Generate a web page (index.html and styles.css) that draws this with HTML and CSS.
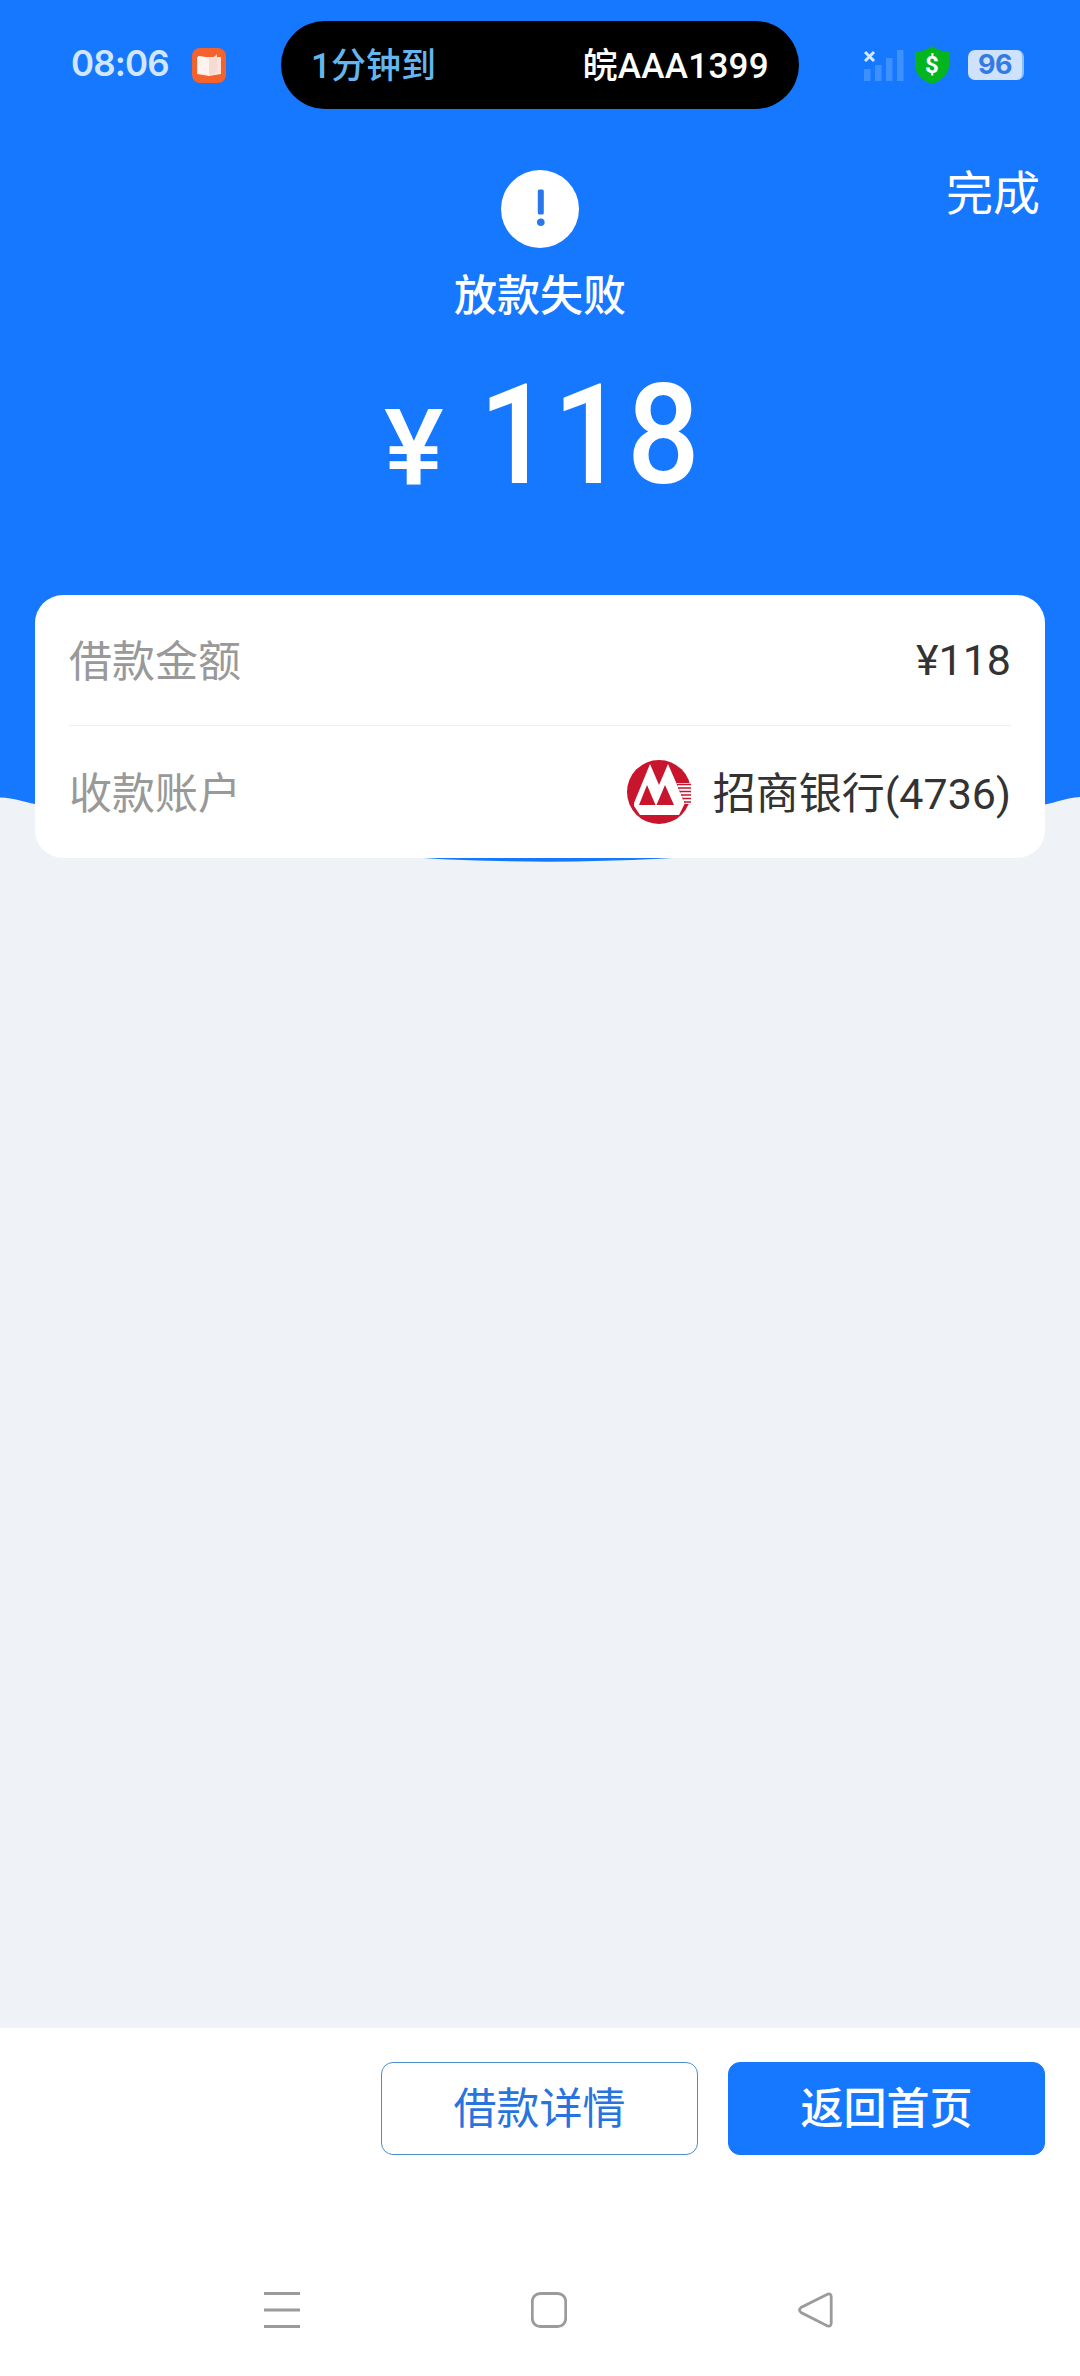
FILE: index.html
```html
<!DOCTYPE html>
<html lang="zh-CN">
<head>
<meta charset="utf-8">
<title>放款失败</title>
<link rel="stylesheet" href="styles.css">
</head>
<body>
<div class="screen">
  <svg class="backdrop" viewBox="0 0 1080 870" aria-hidden="true">
    <path fill="#1677ff" d="M0 0H1080V797C1065 798 1058 802 1045 804.500C930 832 750 861.700 548 861.700S150 832 35 804C24 802 15 798 0 797.500Z"/>
  </svg>
  <header class="status">
    <span class="time">08:06</span>
    <svg class="book" viewBox="0 0 34 35">
      <rect width="34" height="35" rx="8" fill="#f4622d"/>
      <path fill="#fbe3da" d="M5 9H29V26L17 28 5 26Z"/>
      <path fill="#fff3ed" d="M6 8Q13 8 17 11V28Q13 25 6 26Z"/>
      <path fill="#f5dcd3" d="M17 11Q22 10 25 6V24Q21 26 17 28Z"/>
    </svg>
    <div class="island"><span class="eta">1分钟到</span><span class="plate">皖AAA1399</span></div>
    <svg class="signal" viewBox="0 0 40 31">
      <path fill="#3f90ff" d="M0 19h6.500v12H0zM11 15h6.500v16H11zM22 8h6.500v23H22zM33 0h6.500v31H33z"/>
      <path stroke="#d6e8ff" stroke-width="3" d="m1 2 9 9m0-9-9 9"/>
    </svg>
    <svg class="shield" viewBox="0 0 34 38">
      <path fill="#04b51d" d="M17 0Q23 5 34 6V20Q33 32 17 38 1 32 0 20V6Q11 5 17 0Z"/>
      <text x="17" y="27" text-anchor="middle">$</text>
    </svg>
    <span class="battery">96</span>
  </header>
  <main class="content">
    <div class="toolbar"><span class="done">完成</span></div>
    <section class="result">
      <svg class="alert" viewBox="0 0 78 78">
        <circle cx="39" cy="39" r="39" fill="#fff"/>
        <rect x="36.800" y="19.500" width="6" height="25" rx="1.500" fill="#2878ec"/>
        <circle cx="39.800" cy="52.300" r="3.800" fill="#2878ec"/>
      </svg>
      <h1 class="title">放款失败</h1>
      <div class="amount"><span class="yen">¥</span><span class="digits">118</span></div>
    </section>
    <section class="card">
      <div class="row"><span class="label">借款金额</span><span class="value"><span class="text">¥118</span></span></div>
      <div class="row">
        <span class="label">收款账户</span>
        <span class="value">
          <svg class="bank" viewBox="0 0 64 64">
            <circle cx="32" cy="32" r="32" fill="#c8152d"/>
            <path fill="#fff" d="M7 43 23 4 32 25 41 4 58 43 52 55H13L7 46Z"/>
            <path fill="#c8152d" d="M20 25 28.500 45H12ZM38 25 47 45H29.500Z"/>
            <path fill="#fff" d="M49.500 23H64V44H58.500Z"/>
            <path stroke="#c8152d" stroke-width="1.300" d="M50 24.500h14M51 28h13M52.500 31.500H64M54 35h10M55.500 38.500H64M57 42h7"/>
          </svg>
          <span class="text">招商银行(4736)</span>
        </span>
      </div>
    </section>
  </main>
  <footer class="footer">
    <div class="actions">
      <button class="button outline">借款详情</button>
      <button class="button primary">返回首页</button>
    </div>
    <nav class="nav">
      <svg viewBox="0 0 36 36"><path d="M0 1.500h36M0 18h36M0 34.500h36"/></svg>
      <svg viewBox="0 0 36 36"><rect x="1.300" y="1.500" width="33.400" height="33" rx="8"/></svg>
      <svg viewBox="0 0 36 36"><path d="M29.500 2.200 3 15.500Q0 18 3 20.500L29.500 34Q33.200 35 33.200 31V5Q33.200 1 29.500 2.200Z"/></svg>
    </nav>
  </footer>
</div>
</body>
</html>
```
FILE: styles.css
```css
* { box-sizing: border-box; }
body { margin: 0; font-family: Roboto, "Noto Sans CJK SC", sans-serif; }
svg { display: block; flex: none; }
.screen { position: relative; display: flex; flex-direction: column; width: 1080px; height: 2376px; background: #eff3f8; }
.backdrop { position: absolute; top: 0; left: 0; width: 1080px; height: 870px; }
.status { position: relative; display: flex; align-items: center; height: 130px; padding: 0 55px 0 71px; }
.time { width: 121px; padding-bottom: 3px; font: 600 35px/1 Inter, sans-serif; letter-spacing: -0.9px; color: #d0e7ff; }
.book { width: 34px; height: 35px; }
.island { display: flex; align-items: center; justify-content: space-between; width: 518px; height: 88px; margin-left: 55px; padding: 0 30px 5px 30px; border-radius: 44px; background: #000; color: #fff; font-size: 35px; font-weight: 500; white-space: nowrap; }
.eta { color: #65b5ee; }
.plate { letter-spacing: 0.3px; }
.signal { width: 40px; height: 31px; margin: 0 11px 0 65px; }
.shield { width: 34px; height: 38px; margin-right: 19px; }
.shield text { font: 700 24px Roboto, sans-serif; fill: #fff; }
.battery { width: 56px; height: 30px; border-right: 2px solid #8bbcfd; border-radius: 7px; background: #cfe2fb; color: #3479e6; font: 700 27px/30px Inter, sans-serif; letter-spacing: -0.5px; text-align: center; }
.content { position: relative; flex: 1; }
.toolbar { display: flex; justify-content: flex-end; height: 40px; padding: 29px 40px 0 0; }
.done { color: #fff; font-size: 47px; line-height: 70px; }
.result { display: flex; flex-direction: column; align-items: center; height: 425px; color: #fff; }
.alert { width: 78px; height: 78px; }
.title { margin: 16px 0 0; font-size: 43px; font-weight: 500; line-height: 64px; }
.amount { display: flex; align-items: baseline; width: 312px; margin-top: 38px; font-weight: 500; line-height: 140px; }
.yen { flex: none; width: 95px; font-size: 105px; transform: translateY(2px) scaleX(1.07); transform-origin: left; }
.digits { flex: none; font-size: 139px; letter-spacing: 1.5px; transform: scaleX(.92); transform-origin: left; }
.card { height: 263px; margin: 0 35px; padding: 0 34px; border-radius: 28px; background: #fff; }
.row { display: flex; align-items: center; justify-content: space-between; height: 130px; font-size: 43px; }
.row + .row { height: 133px; border-top: 1px solid #eee; }
.label { padding-bottom: 5px; color: #999; }
.value { display: flex; align-items: center; gap: 22px; color: #333; }
.text { padding-bottom: 4px; }
.row:first-child .text { padding-bottom: 1px; }
.bank { width: 64px; height: 64px; }
.footer { height: 348px; background: #fff; }
.actions { display: flex; justify-content: flex-end; gap: 30px; padding: 34px 35px 0 0; }
.button { width: 317px; height: 93px; padding: 0; border: 1px solid #1677ff; border-radius: 12px; background: #fff; color: #2874df; font-family: inherit; font-size: 43px; line-height: 90px; }
.outline { border-color: #4d8dcc; }
.primary { background: #1677ff; color: #fff; font-weight: 500; }
.nav { display: flex; justify-content: space-between; padding: 137px 246px 0 264px; }
.nav svg { width: 36px; height: 36px; fill: none; stroke: #9b9b9b; stroke-width: 2.800; }
```
